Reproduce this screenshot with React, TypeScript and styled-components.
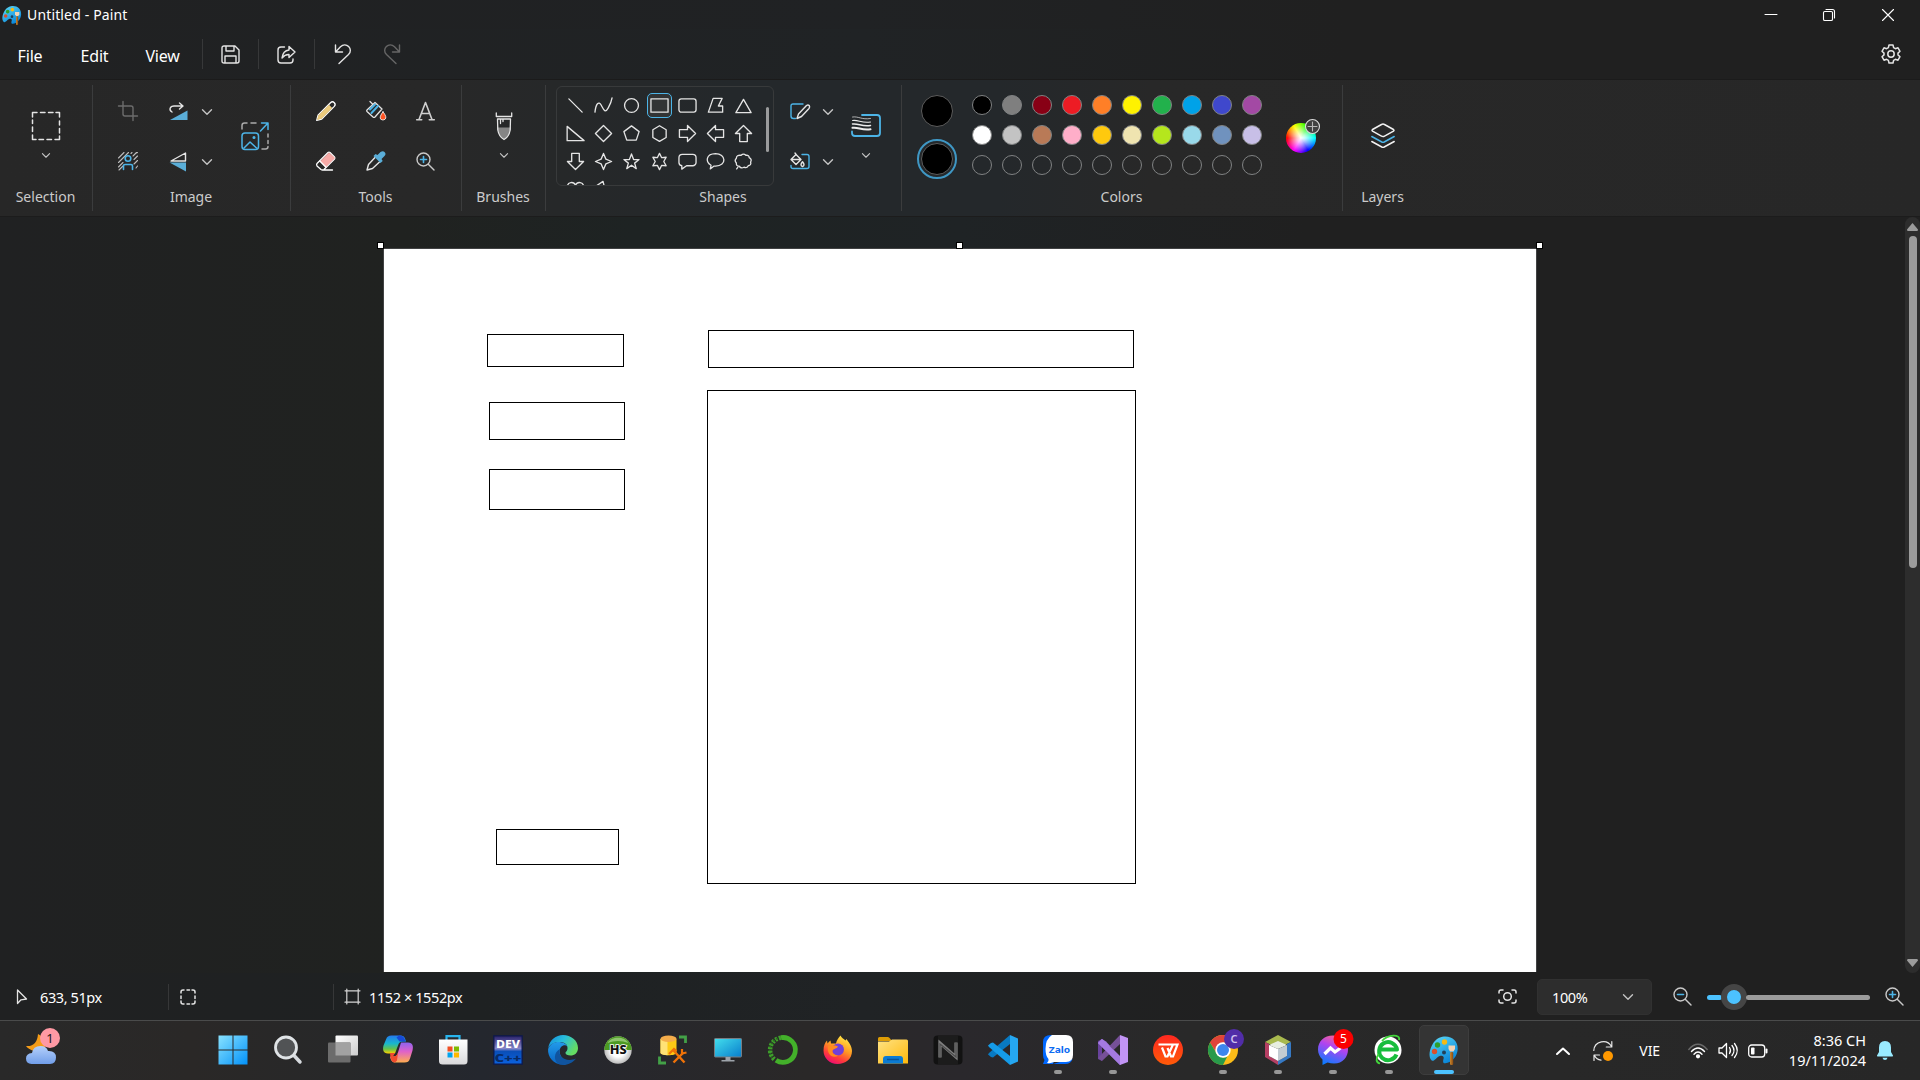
import React from "react";
import styled, { createGlobalStyle } from "styled-components";

const BLUE = "#4cb4e7";
const FONT = '"Noto Sans", "Open Sans", sans-serif';

const Global = createGlobalStyle`
  * { box-sizing: border-box; }
  html, body { margin: 0; padding: 0; background: #202020; overflow: hidden; }
  body { font-family: ${FONT}; color: #fff; }
  svg { display: block; flex: none; overflow: visible; }
`;

const Window = styled.div`
  width: 1920px;
  height: 1080px;
  display: flex;
  flex-direction: column;
  overflow: hidden;
`;

/* ---------- title and menu ---------- */
const TitleBar = styled.header`
  height: 29px;
  display: flex;
  align-items: center;
  padding-left: 2px;
  padding-right: 3px;
  background: linear-gradient(90deg, #202122 0, #202224 45%, #202020 70%);
`;
const Title = styled.span`
  margin-left: 5px;
  font-size: 14px;
  line-height: 20px;
  letter-spacing: 0.15px;
  flex: 1;
`;
const CaptionButton = styled.div`
  width: 58.5px;
  height: 29px;
  display: flex;
  align-items: center;
  justify-content: center;
`;
const MenuBar = styled.nav`
  height: 51px;
  display: flex;
  align-items: center;
  border-bottom: 1px solid #1b1b1b;
  background: linear-gradient(90deg, #202122 0, #202325 45%, #202020 70%);
`;
const MenuItem = styled.span<{ $w: number }>`
  width: ${(p) => p.$w}px;
  text-align: center;
  font-size: 16px;
  letter-spacing: -0.2px;
  padding-top: 3px;
`;
const MenuRule = styled.i<{ $l?: number }>`
  width: 1px;
  height: 30px;
  background: #373839;
  margin-left: ${(p) => p.$l ?? 0}px;
`;
const MenuButton = styled.span<{ $w: number }>`
  width: ${(p) => p.$w}px;
  display: flex;
  justify-content: center;
`;
const Spacer = styled.span`
  flex: 1;
`;

/* ---------- ribbon ---------- */
const Ribbon = styled.section`
  height: 137px;
  display: flex;
  border-bottom: 1px solid #1c1c1c;
  background: linear-gradient(90deg, #272727 0, #282828 22%, #262829 29%, #24282b 38%, #24282b 52%, #282828 60%, #272727 100%);
`;
const Group = styled.div<{ $w: number; $last?: boolean }>`
  width: ${(p) => p.$w}px;
  height: 126px;
  margin-top: 5px;
  border-right: ${(p) => (p.$last ? 0 : 1)}px solid #3b3c3d;
  display: flex;
  flex-direction: column;
`;
const GroupBody = styled.div<{ $pad?: number }>`
  height: 102px;
  padding: 1px 0 0 ${(p) => p.$pad ?? 0}px;
  display: flex;
`;
const GroupLabel = styled.div`
  text-align: center;
  font-size: 14px;
  line-height: 20px;
  color: #cbcbcb;
  padding-right: 1px;
`;
const Stack = styled.div<{ $w?: number }>`
  width: ${(p) => p.$w ?? 50}px;
  height: 100px;
  display: flex;
  flex-direction: column;
`;
const Cell = styled.div<{ $w?: number; $h?: number }>`
  width: ${(p) => p.$w ?? 50}px;
  height: ${(p) => p.$h ?? 50}px;
  display: flex;
  align-items: center;
  justify-content: center;
`;
const SplitCell = styled.div`
  width: 66px;
  height: 50px;
  display: flex;
  align-items: center;
  padding: 1px 0 0 16px;
  gap: 13px;
`;
const TallButton = styled.div<{ $w: number }>`
  width: ${(p) => p.$w}px;
  height: 100px;
  display: flex;
  flex-direction: column;
  align-items: center;
  padding-top: 24px;
  gap: 11px;
`;
const ToolGrid = styled.div`
  display: grid;
  grid-template-columns: repeat(3, 50px);
  grid-template-rows: repeat(2, 50px);
`;
const Gallery = styled.div`
  width: 218px;
  height: 100px;
  border: 1px solid #383a3b;
  border-radius: 6px;
  padding: 4.5px 0 0 4.5px;
  display: flex;
  overflow: hidden;
`;
const ShapeGrid = styled.div`
  display: grid;
  grid-template-columns: repeat(7, 28px);
  grid-auto-rows: 28px;
`;
const ShapeCell = styled.div<{ $on?: boolean }>`
  width: 25px;
  height: 25px;
  margin: 1.5px;
  border-radius: 5px;
  border: 1px solid ${(p) => (p.$on ? BLUE : "transparent")};
  background: ${(p) => (p.$on ? "#323435" : "transparent")};
  display: flex;
  align-items: center;
  justify-content: center;
`;
const GalleryThumb = styled.i`
  width: 3px;
  height: 45px;
  margin: 15.5px 0 0 8px;
  border-radius: 2px;
  background: #9a9b9c;
`;
const ActiveColors = styled.div`
  width: 70px;
  display: flex;
  flex-direction: column;
  align-items: center;
  padding-top: 5px;
  gap: 8px;
`;
const ActiveColor = styled.div<{ $on?: boolean }>`
  width: 40px;
  height: 40px;
  border-radius: 50%;
  border: 2px solid ${(p) => (p.$on ? "#3f97c4" : "transparent")};
  display: flex;
  align-items: center;
  justify-content: center;
  &::before {
    content: "";
    width: 30px;
    height: 30px;
    border-radius: 50%;
    background: #000;
    border: 1px solid #5c5c5c;
  }
`;
const Palette = styled.div`
  display: grid;
  grid-template-columns: repeat(10, 30px);
  grid-template-rows: repeat(3, 30px);
  place-items: center;
  padding-top: 4px;
  margin-left: -5px;
  height: 94px;
`;
const Swatch = styled.i<{ $c: string }>`
  width: 20px;
  height: 20px;
  border-radius: 50%;
  background: ${(p) => p.$c};
  border: 1px solid #808283;
`;
const WheelBox = styled.div`
  position: relative;
  width: 30px;
  height: 30px;
  margin: 37px 0 0 19px;
`;
const Wheel = styled.div`
  width: 30px;
  height: 30px;
  border-radius: 50%;
  background: radial-gradient(circle, #fff 0, rgba(255, 255, 255, 0.75) 20%, rgba(255, 255, 255, 0) 66%),
    conic-gradient(from 270deg, #f00, #ff0, #0f0, #0ff, #00f, #f0f, #f00);
`;
const WheelPlus = styled.div`
  position: absolute;
  left: 19px;
  top: -4px;
`;

/* ---------- work area ---------- */
const Workspace = styled.main`
  height: 756px;
  display: flex;
  justify-content: flex-end;
  background: linear-gradient(90deg, #202122 0, #202220 21%, #1e2323 33%, #1f2325 50%, #202020 68%);
`;
const Viewport = styled.div`
  width: 1905px;
  height: 755px;
  padding: 31px 0 0 383px;
  overflow: hidden;
`;
const Artboard = styled.div`
  position: relative;
  width: 1154px;
  height: 760px;
  background: #fff;
  border: 1px solid #414243;
`;
const Drawn = styled.i<{ $x: number; $y: number; $w: number; $h: number }>`
  position: absolute;
  left: ${(p) => p.$x - 384}px;
  top: ${(p) => p.$y - 249}px;
  width: ${(p) => p.$w}px;
  height: ${(p) => p.$h}px;
  border: 1px solid #000;
`;
const Handle = styled.i<{ $x: number }>`
  position: absolute;
  left: ${(p) => p.$x}px;
  top: -7px;
  width: 7px;
  height: 7px;
  border: 1px solid #000;
  background: #fff;
`;
const ScrollTrack = styled.div`
  width: 15px;
  height: 756px;
  border-radius: 8px;
  background: #2d2d2d;
  display: flex;
  flex-direction: column;
  align-items: center;
  padding: 6px 0;
`;
const ScrollThumb = styled.i`
  width: 8px;
  height: 332px;
  border-radius: 4px;
  background: #9c9c9c;
  margin: 5px 0 auto;
`;

/* ---------- status bar ---------- */
const StatusBar = styled.footer`
  height: 47px;
  display: flex;
  align-items: center;
  background: linear-gradient(90deg, #202122 0, #1e2122 25%, #202325 45%, #202020 65%);
`;
const StatusItem = styled.div<{ $w: number; $pad: number; $gap?: number; $rule?: boolean }>`
  width: ${(p) => p.$w}px;
  height: 26px;
  padding-left: ${(p) => p.$pad}px;
  gap: ${(p) => p.$gap ?? 9}px;
  display: flex;
  align-items: center;
  border-right: ${(p) => (p.$rule ? 1 : 0)}px solid #363738;
`;
const StatusText = styled.span`
  font-size: 14.5px;
  letter-spacing: -0.4px;
  white-space: nowrap;
  padding-top: 1px;
`;
const StatusEnd = styled.span`
  width: 16px;
`;
const ZoomBox = styled.div`
  width: 115px;
  height: 36px;
  margin: 0 21px 0 20px;
  padding: 0 18px 0 14px;
  border-radius: 5px;
  border: 1px solid #313131;
  background: #2d2d2d;
  display: flex;
  align-items: center;
  justify-content: space-between;
`;
const Slider = styled.div`
  width: 163px;
  height: 26px;
  margin: 1px 15px 0 15px;
  display: flex;
  align-items: center;
`;
const Track = styled.i<{ $w: number; $c: string }>`
  width: ${(p) => p.$w}px;
  height: 5px;
  border-radius: 3px;
  background: ${(p) => p.$c};
`;
const Thumb = styled.i`
  width: 26px;
  height: 26px;
  margin: 0 -1px;
  border-radius: 50%;
  border: 6.5px solid #454545;
  background: #4cc2ff;
`;

/* ---------- taskbar ---------- */
const Taskbar = styled.footer`
  height: 60px;
  border-top: 1px solid #4a4b4b;
  display: flex;
  background: linear-gradient(90deg, #292929 0, #2a2827 10%, #272829 18%, #24272e 25%, #26272d 30%, #2a2828 42%, #2a282c 50%, #292929 62%, #272727 100%);
`;
const Weather = styled.div`
  width: 205px;
  padding: 7px 0 0 26px;
`;
const AppSlot = styled.div`
  width: 55.05px;
  height: 59px;
  display: flex;
  justify-content: center;
  padding-top: 4px;
`;
const AppTile = styled.div<{ $on?: boolean }>`
  width: 50px;
  height: 50px;
  border-radius: 5px;
  border: 1px solid ${(p) => (p.$on ? "#3d3d3d" : "transparent")};
  background: ${(p) => (p.$on ? "#343434" : "transparent")};
  display: flex;
  flex-direction: column;
  align-items: center;
  padding-top: 9px;
`;
const Running = styled.i<{ $on?: boolean }>`
  width: ${(p) => (p.$on ? 20 : 8)}px;
  height: 4px;
  margin-top: 5px;
  border-radius: 2px;
  background: ${(p) => (p.$on ? "#4cc2ff" : "#979797")};
`;
const Tray = styled.div`
  flex: 1;
  display: flex;
  align-items: center;
  justify-content: flex-end;
  padding-right: 27px;
`;
const TrayText = styled.span`
  font-size: 14px;
  letter-spacing: -0.1px;
  margin: 0 28px 0 26px;
`;
const UpdateBox = styled.span`
  margin-left: 23px;
`;
const TrayGlyph = styled.span`
  margin: 0 10px;
`;
const Clock = styled.div`
  width: 90px;
  margin: -2px 11px 0 8px;
  font-size: 14.5px;
  letter-spacing: 0;
  line-height: 20px;
  text-align: right;
`;

/* ---------- drawing helpers ---------- */
type IconProps = { w: number; h?: number; vb?: string; s?: string; sw?: number; children: React.ReactNode };
const Icon = ({ w, h = w, vb, s = "#e4e4e4", sw = 1.4, children }: IconProps) => (
  <svg width={w} height={h} viewBox={vb ?? `0 0 ${w} ${h}`} fill="none" stroke={s} strokeWidth={sw} strokeLinecap="round" strokeLinejoin="round">
    {children}
  </svg>
);
const Chevron = ({ small }: { small?: boolean }) => (
  <Icon w={small ? 8 : 10} h={small ? 5 : 6} vb="0 0 10 6" s="#c4c4c4" sw={1.4}>
    <path d="M.5 .7 5 5.2 9.500 .7" />
  </Icon>
);
const ZoomIcon = ({ plus }: { plus?: boolean }) => (
  <Icon w={19} sw={1.4} s="#c9c9c9">
    <circle cx="7.500" cy="7.500" r="6.500" />
    <path d="M12.500 12.500 18 18" />
    <path d={plus ? "M4.500 7.500h6M7.500 4.500v6" : "M4.500 7.500h6"} stroke={BLUE} strokeWidth="1.600" />
  </Icon>
);

const PaintLogo = ({ size }: { size: number }) => (
  <Icon w={size} vb="0 0 30 30" s="none">
    <defs>
      <linearGradient id="pl" x1="0" y1="0" x2="0.6" y2="1">
        <stop stopColor="#5fdcf8" />
        <stop offset="1" stopColor="#0a86d8" />
      </linearGradient>
      <linearGradient id="ph" x1="0" y1="0" x2="1" y2="0">
        <stop stopColor="#c8872f" />
        <stop offset="1" stopColor="#8a4a10" />
      </linearGradient>
    </defs>
    <path d="M15 1.500C23 .8 29 6 28.700 14c-.2 7-5.500 13.500-12.500 14.300-3 .2-2-3-1.500-5 .4-2.300-1.600-3.200-4-2.300-3.500 1.500-5.500 6-8 4.500C-1 22 .5 14 4 8.500 6.700 4.500 10.500 1.800 15 1.500z" fill="url(#pl)" />
    <circle cx="5.500" cy="16.500" r="2.700" fill="#d8502c" />
    <circle cx="8.500" cy="10" r="2.700" fill="#2f9e2a" />
    <circle cx="15.500" cy="7" r="2.700" fill="#f5b914" />
    <circle cx="15" cy="17.500" r="2" fill="#21415a" />
    <rect x="21" y="17" width="3.200" height="13" rx="1.200" fill="url(#ph)" />
    <path d="M19.500 10.500h6.500v3.500l-1.500 2.500h-3.500l-1.500-2.500z" fill="#f3d3b4" />
  </Icon>
);

/* ---------- shape gallery ---------- */
const shapeArt: React.ReactNode[] = [
  <path d="M3 3 17 17" />,
  <path d="M1 17C2 8 5 5 7.500 9.500s4 9.500 7.500 3C17 9 18.500 5 19 2" />,
  <circle cx="10" cy="10" r="7.300" />,
  <rect x="1" y="3" width="18" height="14" />,
  <rect x="1" y="3" width="18" height="14" rx="2.500" />,
  <path d="M7.500 2.500H17L13 10.500h4.500V17H2.500z" />,
  <path d="M10 3.500 18 17.500H2z" />,
  <path d="M1.200 2.500V17.500H19z" />,
  <path d="M10 1.500 18.500 10 10 18.500 1.500 10z" />,
  <path d="M10 2 18 8 15 17H5L2 8z" />,
  <path d="M10 1.800 17 6v8.200L10 18.300 3 14.200V6z" />,
  <path d="M1.500 6H10V1.500L18.500 10 10 18.500V14H1.500z" />,
  <path d="M18.500 6H10V1.500L1.500 10 10 18.500V14h8.500z" />,
  <path d="M6 18.500V10H1.500L10 1.500 18.500 10H14v8.500z" />,
  <path d="M6 1.500V10H1.500L10 18.500 18.500 10H14V1.500z" />,
  <path d="M10 1.500 12.500 7.500 18.500 10 12.500 12.500 10 18.500 7.500 12.500 1.500 10 7.500 7.500z" />,
  <path d="M10 2 12.200 8H18l-4.700 3.700L15 17.500 10 14l-5 3.500 1.700-5.800L2 8h5.800z" />,
  <path d="M10 1.500 12.300 6 17 5.500 14.500 10 17 14.500 12.300 14 10 18.500 7.700 14 3 14.500 5.500 10 3 5.500 7.700 6z" />,
  <path d="M4.500 2.500h11a3.500 3.500 0 0 1 3.500 3.500v5a3.500 3.500 0 0 1-3.500 3.500H9L4 18v-3.600A3.500 3.500 0 0 1 1 11V6a3.500 3.500 0 0 1 3.500-3.500z" />,
  <path d="M4.500 17.800 5.300 14C-1 10 0 2 10 1.700c11 0 12.500 13 0 13.200L8.500 14.800z" />,
  <path d="M7.500 3.500q2.500-2.700 5 0 3.500-.5 3.500 2.500 3.200 1.500 1.500 4.500 1 3.300-2.500 4-1.500 3-4.500 1.500-3 1.800-5-1-3.500-.2-3-3.500-2.500-2.500 0-5Q2.500 3 7.500 3.500zM4 16.200l-1.200 1.600" />,
  <path d="M10 5.500C8 1 1.500 2 1.500 7c0 4 5 7 8.500 11 3.500-4 8.500-7 8.500-11 0-5-6.500-6-8.500-1.500z" />,
  <path d="M9.500 1.500 2 6.500 6 8 5 12l6 6M9.500 1.500l1 4" />,
];

const paletteColors = [
  "#000000", "#7f7f7f", "#880015", "#ed1c24", "#ff7f27", "#fff200", "#22b14c", "#00a2e8", "#3f48cc", "#a349a4",
  "#ffffff", "#c3c3c3", "#b97a57", "#ffaec9", "#ffc90e", "#efe4b0", "#b5e61d", "#99d9ea", "#7092be", "#c8bfe7",
  ...Array(10).fill("transparent"),
];

/* ---------- taskbar artwork, each on a 30 unit square ---------- */
const apps: { art: React.ReactNode; run?: boolean; on?: boolean }[] = [
  { art: <>
    <defs><linearGradient id="win" x1="0" y1="0" x2="30" y2="30" gradientUnits="userSpaceOnUse"><stop stopColor="#8be4ff" /><stop offset="1" stopColor="#0090f8" /></linearGradient></defs>
    <path d="M.5 .5h14v14H.5zM15.500 .5h14v14h-14zM.5 15.500h14v14H.5zM15.500 15.500h14v14h-14z" fill="url(#win)" /></> },
  { art: <><path d="M21 20.500 27 27" stroke="#d6dade" strokeWidth="3.500" strokeLinecap="round" /><circle cx="13" cy="12.500" r="10.500" fill="#515355" stroke="#dfe3e6" strokeWidth="2.800" /></> },
  { art: <><defs><linearGradient id="tv" x1="0" y1="0" x2="1" y2="1"><stop stopColor="#fff" /><stop offset="1" stopColor="#ccc" /></linearGradient></defs>
    <rect x="7.500" y=".5" width="22.500" height="20" rx="1" fill="url(#tv)" /><rect x="0" y="7.500" width="22.500" height="20" rx="1" fill="#6c6c6c" /><path d="M7.500 7.500h15v13h-15z" fill="#a2a2a2" /></> },
  { art: <><defs>
      <linearGradient id="c1" x1="0" y1="0" x2="0" y2="1"><stop stopColor="#2479ee" /><stop offset=".45" stopColor="#19b7cc" /><stop offset=".75" stopColor="#65c24b" /><stop offset="1" stopColor="#ffd000" /></linearGradient>
      <linearGradient id="c2" x1="0" y1="0" x2="0" y2="1"><stop stopColor="#8d63ef" /><stop offset=".45" stopColor="#df62c9" /><stop offset="1" stopColor="#ffad4f" /></linearGradient></defs>
    <path d="M17 .5c4 0 5 2 6 6h-3c-3 0-4 1-5 4l-3 8H5c-5 0-5.500-4-4.500-8L3 4.500C4 1.500 5.500 .5 8.500 .5z" fill="url(#c1)" />
    <path d="M16 .5c4 0 5.500 2 6.500 6h-6l-3-4z" fill="#174ad6" />
    <path d="M13 27.500c-4 0-5-2-6-6h3c3 0 4-1 5-4l3-10h7c5 0 5.500 4 4.500 8l-2.500 8c-1 3-2.500 4-5.500 4z" fill="url(#c2)" />
    <path d="M7 18h5l-2 3.500q3 0 4-2l1-2-1 8-2 2c-4 0-4.500-5-5-9.500z" fill="#f04b2d" /></> },
  { art: <><defs><linearGradient id="st" x1="0" y1="0" x2="0" y2="1"><stop stopColor="#fff" /><stop offset="1" stopColor="#d9d9db" /></linearGradient></defs>
    <path d="M8.500 6V1.200h13V6" stroke="#28b5ee" strokeWidth="2.200" /><path d="M1 4.500h28.500V26q0 3.500-3.500 3.500H4.500Q1 29.500 1 26z" fill="url(#st)" />
    <path d="M9.500 11.500h5v5h-5z" fill="#f04e23" /><path d="M16 11.500h5v5h-5z" fill="#7fba00" /><path d="M9.500 17.500h5v5h-5z" fill="#00a4ef" /><path d="M16 17.500h5v5h-5z" fill="#ffb900" /></> },
  { art: <><defs><linearGradient id="dv" x1="0" y1="0" x2="0" y2="1"><stop stopColor="#28206a" /><stop offset=".45" stopColor="#8686c8" /><stop offset=".55" stopColor="#0a4fb8" /><stop offset="1" stopColor="#0b62e0" /></linearGradient></defs>
    <rect x=".8" y=".8" width="28.400" height="28.400" fill="url(#dv)" stroke="#101a48" strokeWidth="1.400" />
    <text x="15" y="13" textAnchor="middle" fontSize="10.500" fontWeight="800" textLength="24" lengthAdjust="spacingAndGlyphs" fill="#fff">DEV</text>
    <text x="15" y="26.500" textAnchor="middle" fontSize="11" fontWeight="900" textLength="27" lengthAdjust="spacingAndGlyphs" fill="#082b66">C++</text></> },
  { art: <><defs>
      <linearGradient id="e1" x1="0" y1="0" x2="1" y2=".5"><stop stopColor="#138be0" /><stop offset=".5" stopColor="#28bddb" /><stop offset="1" stopColor="#65dc63" /></linearGradient>
      <linearGradient id="e2" x1="0" y1="0" x2="0" y2="1"><stop stopColor="#229bea" /><stop offset="1" stopColor="#0864c4" /></linearGradient></defs>
    <path d="M.2 13C1.500 5 8 0 15 0c8 0 15 5.500 15 13 0 5-3.500 7.500-7.500 7.500-3 0-5-1-5-2.500s2-1.500 2-5c0-3.500-3-6-7.500-6C6 7 2 9.500 .2 13z" fill="url(#e1)" />
    <path d="M.1 14C2 9 6 6.800 11.500 7c4 .2 7 2 7.800 4.500-1-1-2.700-1.500-4-1-4.500 1.500-5 8.500-.5 13 2.500 2.500 5 4 6 4.800C9 33-.8 24 .1 14z" fill="url(#e2)" />
    <path d="M12 14c-3 7 6 14 16 9.500-4 5.500-11 7.500-16 6C5 27 5.500 17 12 14z" fill="#10549f" /></> },
  { art: <><defs><radialGradient id="hs"><stop offset=".5" stopColor="#fff" /><stop offset="1" stopColor="#bcbcbc" /></radialGradient></defs>
    <circle cx="15" cy="15" r="13.700" fill="url(#hs)" /><path d="M1.300 15a13.700 13.700 0 0 1 27.400 0z" fill="#4c9a22" /><path d="M4.500 8C8.500 1 21.500 1 25.500 8q-10.500-4-21 0z" fill="#8ec46d" />
    <text x="15.200" y="19" textAnchor="middle" fontSize="12" fontWeight="800" textLength="17" lengthAdjust="spacingAndGlyphs" fill="#111" stroke="#fff" strokeWidth="1.600" paintOrder="stroke">HS</text></> },
  { art: <><path d="M2.500 4v14c1 3 15 3 16 0V4z" fill="#fdcb16" /><path d="M2.500 4v14c.5 1.500 3 2 7 2.300V4z" fill="#ffe276" /><ellipse cx="10.500" cy="3.800" rx="8" ry="3.200" fill="#f4ad4b" />
    <path d="M21 2h6.500v6M1.500 21.500V28H8" stroke="#43a047" strokeWidth="2.800" /><path d="m15.500 27.500 10-10m-10-2 11 12" stroke="#ef7208" strokeWidth="2.400" /><path d="m11 19 5-5 2.500 2M24 14v4.500l4.500-1" stroke="#ef7208" strokeWidth="2.200" /></> },
  { art: <><defs><linearGradient id="pc" x1="0" y1="0" x2="1" y2="1"><stop stopColor="#43dfed" /><stop offset="1" stopColor="#087dcc" /></linearGradient></defs>
    <rect x="1.500" y="3.500" width="27" height="18.500" rx=".8" fill="url(#pc)" stroke="#777d83" /><path d="M12.500 22h5v3h4v1.500h-13V25h4z" fill="#9da3aa" /></> },
  { art: <><path d="M13 2.700A12.400 12.400 0 1 1 8 25.200" stroke="#43b02a" strokeWidth="4.800" /><path d="M13 2.700A12.400 12.400 0 0 0 6.500 24.500" stroke="#3fa02b" strokeWidth="4.500" strokeDasharray="2.300 1.400" /><path d="M9.500 3.500A13 13 0 0 0 4 22.500" stroke="#2b6d22" strokeWidth="2" strokeDasharray="1.500 2" /></> },
  { art: <><defs><linearGradient id="ff" x1=".8" y1="0" x2=".3" y2="1"><stop stopColor="#fff04b" /><stop offset=".45" stopColor="#ff9a22" /><stop offset=".75" stopColor="#ff3c3a" /><stop offset="1" stopColor="#ec0a75" /></linearGradient></defs>
    <path d="M17.500 .5c1 2 3 3.500 5 5l1-1.500c2 3 5.500 7 5.500 12 0 8-6.500 13-14.500 13S.5 23 .5 15.500c0-5 1.500-8 3.500-10l.5 3c1-1.500 2-2.500 3-3l.5 3h5c.5-3 2.500-6 4.500-8z" fill="url(#ff)" />
    <circle cx="15" cy="14.500" r="6" fill="#7140d8" /><path d="M5 11c4-1 7-1 10 .5-1 2.500-5 2-5.500 4.500-.5 2 2 4.500 6 4.500-6 3.500-12-1-10.500-9.500z" fill="#ff8a20" /></> },
  { art: <><defs><linearGradient id="fo" x1="0" y1="0" x2="1" y2="1"><stop stopColor="#ffe384" /><stop offset="1" stopColor="#ffb90c" /></linearGradient></defs>
    <path d="M0 3.500Q0 2 1.500 2H10q1 0 2 1.500L14 6H0z" fill="#dd9c05" /><path d="M0 6.500h11l3-2h14.500Q30 4.500 30 6v22.500H0z" fill="url(#fo)" /><path d="M5 28.500V24q0-3 3-3h14q3 0 3 3v4.500z" fill="#0b7bd3" /><path d="M9 24.500h12" stroke="#07549a" strokeWidth="1.500" /></> },
  { art: <><rect x=".5" y=".5" width="29" height="29" rx="4" fill="#121212" /><path d="M5 .5h20v29H5z" fill="#1c1c1c" /><path d="M7 22.500V8l16 14V7.500" stroke="#7e7e7e" strokeWidth="3.200" strokeLinejoin="miter" /><path d="M7 22.500V9l16 13V7.500" stroke="#4c4c4c" strokeWidth="1.200" /></> },
  { art: <><path d="M22 0 30 3.500v23L22 30z" fill="#25a7f2" /><path d="M22 0v9L5 22.500 3 22 0 19.500 1 18z" fill="#0879c2" /><path d="M22 30v-9L5 7.500 3 8 0 10.500 1 12z" fill="#159be8" /></> },
  { run: true, art: <><path d="M0 7Q0 0 8 0h12L10 29H0l1.500-4Q0 23 0 20z" fill="#0068ff" /><path d="M10 29h12q6 0 7.500-5L20 26z" fill="#0068ff" /><path d="M9 0h14q7 0 7 7v13q0 7-7 7H11q-3 1.500-7 1 2-1.500 1.500-4Q2.500 21 2.500 14 2.500 4 9 0z" fill="#fff" />
    <text x="16.500" y="17.500" textAnchor="middle" fontSize="9.500" fontWeight="700" textLength="21.500" lengthAdjust="spacingAndGlyphs" fill="#0d6cf2">Zalo</text></> },
  { run: true, art: <><path d="M0 6 4 4v22l-4-2z" fill="#68429c" /><path d="M4 4 8 6.500 26 26l-4 4L0 8z" fill="#a077de" /><path d="M22 0v9L4 26l-4-3z" fill="#765098" /><path d="m22 0 8 3v24l-8 3z" fill="#c294f5" /><path d="m4 4 18 17v9L0 8z" fill="#a47ae1" /></> },
  { art: <><defs><linearGradient id="wp" x1="0" y1="0" x2="0" y2="1"><stop stopColor="#ff2820" /><stop offset="1" stopColor="#ff5b08" /></linearGradient></defs><circle cx="15" cy="15" r="15" fill="url(#wp)" /><path d="M5.500 9.500H20L14.500 21.500h-2L9 12.500M14.500 13l3.500 8.500h2L24.500 9.500H20" stroke="#fff" strokeWidth="2.200" /></> },
  { run: true, art: <><circle cx="15" cy="15" r="15" fill="#fbbc18" /><path d="M2 7.500A15 15 0 0 1 28 7.500H15l-6 11z" fill="#e04439" /><path d="M2 7.500 9 19l6 3.500 4-.5-4 8A15 15 0 0 1 2 7.500z" fill="#289a4b" /><circle cx="15" cy="15" r="7.700" fill="#fff" /><circle cx="15" cy="15" r="6" fill="#3d86ee" />
    <circle cx="26" cy="4" r="10" fill="#512da8" /><text x="26" y="7.800" textAnchor="middle" fontSize="11" fontWeight="600" fill="#d0c2ef">C</text></> },
  { run: true, art: <><path d="m15 0 13 7-13 6L2 7z" fill="#a8b94e" /><path d="m2 7 4 2v12l9 5v4L2 22z" fill="#b53f63" /><path d="m28 7-4 2v12l-9 5v4l13-8z" fill="#3679c4" /><path d="m15 6 9 4-9 4-9-4z" fill="#e7eee0" /><path d="m6 10 9 4v12l-9-5z" fill="#fff" /><path d="m24 10-9 4v12l9-5z" fill="#c3ccd2" /></> },
  { run: true, art: <><defs><linearGradient id="ms" x1=".7" y1="0" x2=".3" y2="1"><stop stopColor="#ff6688" /><stop offset=".4" stopColor="#b044f0" /><stop offset="1" stopColor="#087cff" /></linearGradient></defs>
    <path d="M15 .5C6 .5 0 6.500 0 14.500c0 4 1.800 7.500 4.500 10V30l5-2.500c13 4 20.500-4 20.500-13C30 6.500 24 .5 15 .5z" fill="url(#ms)" /><path d="m6.500 19 6-6 4.500 4 5.500-4" stroke="#fff" strokeWidth="3.300" /><circle cx="25.500" cy="4" r="10" fill="#fb0000" /><text x="25.500" y="8" textAnchor="middle" fontSize="12" fill="#fff">5</text></> },
  { run: true, art: <><circle cx="14" cy="15" r="13.500" fill="#fff" /><path d="M22.500 19.500A9 9 0 1 1 23 14.500H7" stroke="#18bd3c" strokeWidth="4" strokeLinejoin="round" /><path d="M8 6C14-1 27-1 25 5M4.500 19c-3 5-2.500 8.500 1.500 9.500" stroke="#42d53b" strokeWidth="1.800" /></> },
  { run: true, on: true, art: null },
];

const App = () => (
  <>
    <Global />
    <Window>
      <TitleBar>
        <PaintLogo size={20} />
        <Title>Untitled - Paint</Title>
        <CaptionButton><Icon w={12} s="#fff" sw={1}><path d="M0 5.500h12" /></Icon></CaptionButton>
        <CaptionButton><Icon w={12} s="#fff" sw={1.1}><rect x=".5" y="2.500" width="9" height="9" rx="1.300" /><path d="M3 .5h6.500q2 0 2 2V9" /></Icon></CaptionButton>
        <CaptionButton><Icon w={12} s="#fff" sw={1.1}><path d="m.5.5 11 11m0-11-11 11" /></Icon></CaptionButton>
      </TitleBar>

      <MenuBar>
        <MenuItem $w={60}>File</MenuItem>
        <MenuItem $w={69}>Edit</MenuItem>
        <MenuItem $w={67}>View</MenuItem>
        <MenuRule $l={6} />
        <MenuButton $w={55}><Icon w={19}><path d="M3 1h11l4 4v11q0 2-2 2H3q-2 0-2-2V3q0-2 2-2zM5 1v5h8V1M4 18v-7h11v7" /></Icon></MenuButton>
        <MenuRule />
        <MenuButton $w={55}><Icon w={19}><path d="M7.500 2H4Q1 2 1 5v10q0 3 3 3h9q3 0 3-3v-1" /><path d="M12 1.500 18 7l-6 5.500V9.500q-4-.2-7 3.500Q6 5.500 12 5z" /></Icon></MenuButton>
        <MenuRule />
        <MenuButton $w={56}><Icon w={18} h={20}><path d="M1.500 1v7h7M1.500 8 6.500 2.800C12-2.500 20 5 14.500 10.500L5 19.500" /></Icon></MenuButton>
        <MenuButton $w={42}><Icon w={18} h={20} s="#666"><path d="M16.500 1v7h-7M16.500 8l-5-5.200C6-2.500-2 5 3.500 10.500L13 19.500" /></Icon></MenuButton>
        <Spacer />
        <MenuButton $w={59}><Icon w={20} sw={1.5}>
          <circle cx="10" cy="10" r="3.200" />
          <path d="M8 1h4l.6 2.700 1.800 1 2.600-.9 2 3.500-2 1.800v1.800l2 1.800-2 3.500-2.600-.9-1.800 1L12 19H8l-.6-2.700-1.800-1-2.600.9-2-3.500 2-1.800V9.100L1 7.300l2-3.500 2.600.9 1.800-1z" />
        </Icon></MenuButton>
      </MenuBar>

      <Ribbon>
        <Group $w={93}>
          <GroupBody>
            <TallButton $w={92}>
              <Icon w={32} sw={1.5}><path d="M2.500 7V2.500H7m3.500 0h4.500m3.500 0h4.500m3 0H29.500V7m0 4v4m0 3.500v4.500m0 3v3.500H25m-3.500 0H17m-3.500 0H9m-3 0H2.500V25m0-3.500V17m0-3.500V10" /></Icon>
              <Chevron small />
            </TallButton>
          </GroupBody>
          <GroupLabel>Selection</GroupLabel>
        </Group>

        <Group $w={198}>
          <GroupBody $pad={10}>
            <Stack>
              <Cell><Icon w={20} s="#6c6c6c"><path d="M5 .5V13q0 2 2 2h12.500M.5 5H13q2 0 2 2v12.500" /></Icon></Cell>
              <Cell><Icon w={20} h={18} s="#bdbdbd" sw={1.1}>
                <path d="M.5 6 6 .5M.5 10.500l10-10M.5 15 5 10.500M1 18l4-4M13 1.500l1-1M15 4l3.500-3.500M16 7.500 19.500 4M16 12l3.500-3.500M18 16l1.500-2M18.500 1l1-.5" />
                <g stroke={BLUE} strokeWidth="1.600"><circle cx="10" cy="6.500" r="2.800" /><path d="M5.500 17.500V14q0-1.500 1.500-1.500h6q1.500 0 1.500 1.500v3.500" /></g>
              </Icon></Cell>
            </Stack>
            <Stack $w={66}>
              <SplitCell>
                <Icon w={20}><path d="M3 10Q0 8 1.500 5.500 2.500 4 5 4h8.500M10.500 1l3.500 3-3.500 3" /><path d="M18.500 8.500v9.500H1z" fill="#5aaed8" stroke="none" /></Icon>
                <Chevron />
              </SplitCell>
              <SplitCell>
                <Icon w={20}><path d="M16.500 1v8H2z" /><path d="M17 10.500v9L.5 10.500z" fill="#5aaed8" stroke="none" /></Icon>
                <Chevron />
              </SplitCell>
            </Stack>
            <Cell $w={72} $h={100}>
              <Icon w={28} sw={1.5} s="#aaa">
                <path d="M1 7V3.500Q1 1 3.500 1H6M10 1h5M27 12v3m0 3.500v3M21 27h3.500q2.500 0 2.500-2.500" />
                <g stroke={BLUE}><rect x="1" y="11" width="16.500" height="16.500" rx="3" /><path d="m3 26 6-6 6.500 6M20.500 1H27v6.500M27 1l-7.500 8" /><circle cx="13" cy="15.500" r=".8" fill={BLUE} /></g>
              </Icon>
            </Cell>
          </GroupBody>
          <GroupLabel>Image</GroupLabel>
        </Group>

        <Group $w={171}>
          <GroupBody $pad={10}>
            <ToolGrid>
              <Cell><Icon w={20} sw={1.3} s="#fff"><path d="m.7 19.300 1.300-5L14.500 1.700q2-1.800 3.800 0 1.700 1.800 0 3.700L5.700 18z" /><path d="m1 19 1.300-4.500L13 3.800 16.200 7 5.500 17.700z" fill="#eccb7c" stroke="none" /></Icon></Cell>
              <Cell><Icon w={20} sw={1.3}><path d="m4 .5 3 3M1 9l8-7.500 7 6.500-7 8q-1 .8-2 0L1 10.500Q.3 9.700 1 9z" /><path d="M4 8.500 9 3.500M5.500 12 12 5" stroke={BLUE} strokeWidth="2" /><path d="M17 10.800q4.500 5.500 2 7.500-2 1.500-4.200 0-2-2.200 2.200-7.500z" fill="#ff5423" stroke="#fff" strokeWidth=".8" /></Icon></Cell>
              <Cell><Icon w={20} h={20} sw={1.6} s="#cfcfcf"><path d="M3 18.500 9.500 1.500 16 18.500M5.500 12.500h8M.7 18.700h5M13.300 18.700h5" /></Icon></Cell>
              <Cell><Icon w={20} sw={1.3} s="#fff"><path d="m1 12.500 11-11q1-.8 2 0l4.500 4.500q.8 1 0 2L8 18.500q-1.500 1-3 0L1 15q-.8-1.500 0-2.500zM7 19h9.500" /><path d="m4 10.500 9-9L19 7l-9.500 9.500z" fill="#f6aaa7" stroke="none" /><path d="m3.800 10 6 6" /></Icon></Cell>
              <Cell><Icon w={20} sw={1.4}><path d="m9 6.500-6.500 7L1 19l5.500-1.500 7-6.500" /><path d="m7.500 5 2-2 2 1 3-3q2.500-1.700 4 0 2 1.800 0 4l-3 3 1.200 2-2.200 2z" fill="#5aaed8" stroke="none" /></Icon></Cell>
              <Cell $w={49}><ZoomIcon plus /></Cell>
            </ToolGrid>
          </GroupBody>
          <GroupLabel>Tools</GroupLabel>
        </Group>

        <Group $w={84}>
          <GroupBody>
            <TallButton $w={83}>
              <Icon w={32} sw={1.3}>
                <path d="M9 17.500h14l-2 6q-1.500 4.500-5 6-3.500-1.500-5-6z" fill="#858585" stroke="none" />
                <path d="M8.300 3v3.500h15.400V3M9.500 9l.3 11q1.200 7 6.200 9.500 5-2.500 6.200-9.500l.3-11zM12.500 9v4.500M15 9v2.500" />
              </Icon>
              <Chevron small />
            </TallButton>
          </GroupBody>
          <GroupLabel>Brushes</GroupLabel>
        </Group>

        <Group $w={356}>
          <GroupBody $pad={10}>
            <Gallery>
              <ShapeGrid>
                {shapeArt.map((art, i) => (
                  <ShapeCell key={i} $on={i === 3}><Icon w={19} vb="0 0 20 20" sw={1.4}>{art}</Icon></ShapeCell>
                ))}
              </ShapeGrid>
              <GalleryThumb />
            </Gallery>
            <Stack $w={66}>
              <SplitCell>
                <Icon w={20} h={17}><path d="M13 1H3Q1 1 1 3v10q0 2.500 2.500 2.500h2" stroke={BLUE} /><path d="m7 15.500 1.500-4.500L16.500 2.500q1.500-1 2.700 0 1 1.500-.2 3L11.500 13.500z" /></Icon>
                <Chevron />
              </SplitCell>
              <SplitCell>
                <Icon w={20} h={17}><path d="M12 1.500h5q2 0 2 2v10q0 2-2 2H3q-2 0-2-2v-1" stroke={BLUE} /><path d="M5 0l1.500 2M1 6.500l5-5 5 5-5 5zM1.500 6.500h9" /><path d="M12.500 8.800q3 3.500 0 4.700-3-1.200 0-4.700z" /></Icon>
                <Chevron />
              </SplitCell>
            </Stack>
            <TallButton $w={52}>
              <Icon w={30} h={32} s="#ececec">
                <path d="M11 5h15q3 0 3 3v15q0 3-3 3H4q-3 0-3-3v-1.500" stroke={BLUE} strokeWidth="1.800" />
                <path d="M1.500 7c6-1 9 3 18 1.500" strokeWidth=".7" /><path d="M1.500 10.500c6-1 9 3 18 1.500" strokeWidth="1.100" /><path d="M1.500 14c6-1 9 3 18 1.500" strokeWidth="1.500" /><path d="M1.500 17.800c6-1 9 3 18 1.500" strokeWidth="2" />
              </Icon>
              <Chevron small />
            </TallButton>
          </GroupBody>
          <GroupLabel>Shapes</GroupLabel>
        </Group>

        <Group $w={441}>
          <GroupBody>
            <ActiveColors><ActiveColor /><ActiveColor $on /></ActiveColors>
            <Palette>{paletteColors.map((c, i) => <Swatch key={i} $c={c} />)}</Palette>
            <WheelBox>
              <Wheel />
              <WheelPlus><Icon w={15} s="#b9b9b9" sw={1.1}><circle cx="7.500" cy="7.500" r="7" fill="#424242" stroke="#ddd" /><path d="M7.500 3v9M3 7.500h9" /></Icon></WheelPlus>
            </WheelBox>
          </GroupBody>
          <GroupLabel>Colors</GroupLabel>
        </Group>

        <Group $w={80} $last>
          <GroupBody>
            <Cell $w={80} $h={100}>
              <Icon w={24} h={26} sw={1.5} s="#f2f2f2">
                <path d="M10.500 1.500q1.500-.8 3 0l9 5q1 .8 0 1.600l-9 5q-1.500.8-3 0l-9-5q-1-.8 0-1.600z" />
                <path d="m.8 13.500 10 5.500q1.200.6 2.400 0l10-5.500" stroke={BLUE} /><path d="m.8 18.500 10 5.500q1.200.6 2.400 0l10-5.500" />
              </Icon>
            </Cell>
          </GroupBody>
          <GroupLabel>Layers</GroupLabel>
        </Group>
      </Ribbon>

      <Workspace>
        <Viewport>
          <Artboard>
            <Drawn $x={487} $y={334} $w={137} $h={33} />
            <Drawn $x={489} $y={402} $w={136} $h={38} />
            <Drawn $x={489} $y={469} $w={136} $h={41} />
            <Drawn $x={496} $y={829} $w={123} $h={36} />
            <Drawn $x={708} $y={330} $w={426} $h={38} />
            <Drawn $x={707} $y={390} $w={429} $h={494} />
            <Handle $x={-7} />
            <Handle $x={572} />
            <Handle $x={1152} />
          </Artboard>
        </Viewport>
        <ScrollTrack>
          <Icon w={11} h={8} s="none"><path d="M5.500 0 11 6.500Q11 8 10 8H1Q0 8 0 6.500z" fill="#9c9c9c" /></Icon>
          <ScrollThumb />
          <Icon w={11} h={8} s="none"><path d="M5.500 8 11 1.500Q11 0 10 0H1Q0 0 0 1.500z" fill="#9c9c9c" /></Icon>
        </ScrollTrack>
      </Workspace>

      <StatusBar>
        <StatusItem $w={169} $pad={16} $gap={12} $rule>
          <Icon w={12} h={16} sw={1.3}><path d="M1.500 1v13.500L5 10.800 10.500 10z" /></Icon>
          <StatusText>633, 51px</StatusText>
        </StatusItem>
        <StatusItem $w={165} $pad={11} $rule>
          <Icon w={16} sw={1.5}><path d="M1 4V3q0-2 2-2h1M7 1h2.500M12 1h1q2 0 2 2v1m0 3v2.500m0 2.500v1q0 2-2 2h-1m-2.500 0H7m-3 0H3q-2 0-2-2v-1m0-2.500V7" /></Icon>
        </StatusItem>
        <StatusItem $w={300} $pad={11}>
          <Icon w={15} sw={1.2} s="#d4d4d4"><path d="M1.800 0v15M13.200 0v15M0 1.800h15M0 13.200h15" /></Icon>
          <StatusText>1152 × 1552px</StatusText>
        </StatusItem>
        <Spacer />
        <Icon w={19} h={15} sw={1.5}><path d="M1 4V3q0-2 2-2h2M14 1h2q2 0 2 2v1M1 11v1q0 2 2 2h2m9 0h2q2 0 2-2v-1" /><circle cx="9.500" cy="7.500" r="3.800" /></Icon>
        <ZoomBox><StatusText>100%</StatusText><Chevron /></ZoomBox>
        <ZoomIcon />
        <Slider><Track $w={15} $c="#4cc2ff" /><Thumb /><Track $w={124} $c="#9b9b9b" /></Slider>
        <ZoomIcon plus />
        <StatusEnd />
      </StatusBar>

      <Taskbar>
        <Weather>
          <Icon w={34} h={36} s="none">
            <defs><linearGradient id="cl" x1="0" y1="0" x2="0" y2="1"><stop stopColor="#b5d0fb" /><stop offset="1" stopColor="#719ee9" /></linearGradient></defs>
            <path d="M12 6q9 4 7 13L8 23q-6-2-8-5 11 1 12-12z" fill="#f59c18" />
            <path d="M5.500 36q-5.500-.5-5.500-5.500 0-5 6-5.500 1-7 8.500-7 6 0 7.500 5 8-.5 8 6.500 0 6-6 6.500z" fill="url(#cl)" />
            <circle cx="24" cy="10" r="10" fill="#ff99a4" />
            <text x="24" y="14.500" textAnchor="middle" fontSize="13" fill="#221517">1</text>
          </Icon>
        </Weather>
        {apps.map((a, i) => (
          <AppSlot key={i}>
            <AppTile $on={a.on}>
              {a.art ? <svg width="30" height="30" viewBox="0 0 30 30" fill="none">{a.art}</svg> : <PaintLogo size={30} />}
              {a.run && <Running $on={a.on} />}
            </AppTile>
          </AppSlot>
        ))}
        <Tray>
          <Icon w={14} h={8} s="#fff" sw={2}><path d="m1 7 6-5.500L13 7" /></Icon>
          <UpdateBox><Icon w={20} s="#e8e8e8" sw={1.2}><path d="M.8 9.500C1.500 0 14-2.500 18.500 5.500M18.800 .5v5.500h-5.500M8 19.200Q3.500 18.500 1.500 14.500M1 19.500V14h5.500" /><circle cx="15" cy="15" r="5" fill="#ff9800" stroke="none" /></Icon></UpdateBox>
          <TrayText>VIE</TrayText>
          <Icon w={20} h={16} s="#fff" sw={1.4}>
            <path d="M.8 6.500q9-10.500 18.400 0" stroke="#6a6a6a" /><path d="M3.500 8.500q6.500-7 13 0" /><path d="M6 11.200q4-4.300 8 0" /><circle cx="10" cy="13.300" r="1.400" fill="#fff" />
          </Icon>
          <TrayGlyph><Icon w={20} h={17} s="#fff" sw={1.3}><path d="M1 6v5h3l4.500 4.500v-14L4 6zM11.500 5.500q2 3 0 6M14 3.500q4 5 0 10M16.500 1.500q5.500 7 0 14" /></Icon></TrayGlyph>
          <Icon w={20} h={14} s="#fff" sw={1.3}><rect x=".7" y="1" width="16" height="12" rx="3" /><path d="M18.500 5.500v3" strokeWidth="2" /><rect x="3" y="3.500" width="3.500" height="7" rx=".8" fill="#fff" stroke="none" /></Icon>
          <Clock>8:36 CH<br />19/11/2024</Clock>
          <Icon w={16} h={19} s="none"><path d="M8 0q6 .3 6 6.500V11l2 3.500q.3 1-.8 1H.8q-1.100 0-.8-1L2 11V6.500Q2 .3 8 0zM5.500 16.800h5Q10 19 8 19t-2.500-2.200z" fill="#99ebff" /></Icon>
        </Tray>
      </Taskbar>
    </Window>
  </>
);

export default App;
